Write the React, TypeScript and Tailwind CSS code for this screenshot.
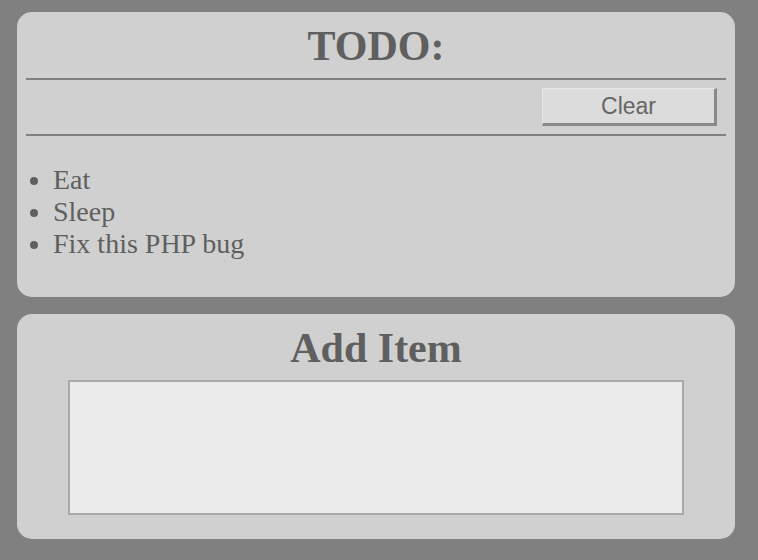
import React from "react";

const items = ["Eat", "Sleep", "Fix this PHP bug"];

export default function App() {
    const [todos, setTodos] = React.useState(items);
    const [draft, setDraft] = React.useState("");

    return (
        <div className="min-h-[560px] bg-[#808080] pt-[12px] pb-[22px] pl-[17px] font-['Liberation_Serif',serif] text-[#5f5f5f]">
            <div className="w-[718px] rounded-[15px] bg-[#d0d0d0] px-[9px] pt-[10px] pb-[9px]">
                <h1 className="mb-[8px] text-center text-[42px] font-bold leading-[48px]">TODO:</h1>
                <div className="h-[2px] bg-[#808080]" />
                <div className="flex justify-end py-[8px] pr-[9px]">
                    <button
                        className="h-[38px] w-[175px] border-t border-l border-t-[#e6e6e6] border-l-[#e6e6e6] border-r-[3px] border-b-[3px] border-r-[#8a8a8a] border-b-[#8a8a8a] bg-[#dcdcdc] font-['Liberation_Sans',sans-serif] text-[23px] leading-none text-[#666]"
                        onClick={() => setTodos([])}>
                        Clear
                    </button>
                </div>
                <div className="h-[2px] bg-[#808080]" />
                <ul className="my-[28px] list-disc pl-[27px] text-[28px] leading-[32px]">
                    {todos.map((t) => (
                        <li key={t}>{t}</li>
                    ))}
                </ul>
            </div>

            <div className="mt-[17px] flex w-[718px] flex-col items-center rounded-[15px] bg-[#d0d0d0] pt-[10px] pb-[24px]">
                <h1 className="mb-[8px] text-center text-[42px] font-bold leading-[48px]">Add Item</h1>
                <textarea
                    className="block h-[135px] w-[616px] resize-none border-2 border-[#aaaaaa] bg-[#ebebeb] outline-none"
                    value={draft}
                    onChange={(e) => setDraft(e.target.value)}
                />
            </div>
        </div>
    );
}
